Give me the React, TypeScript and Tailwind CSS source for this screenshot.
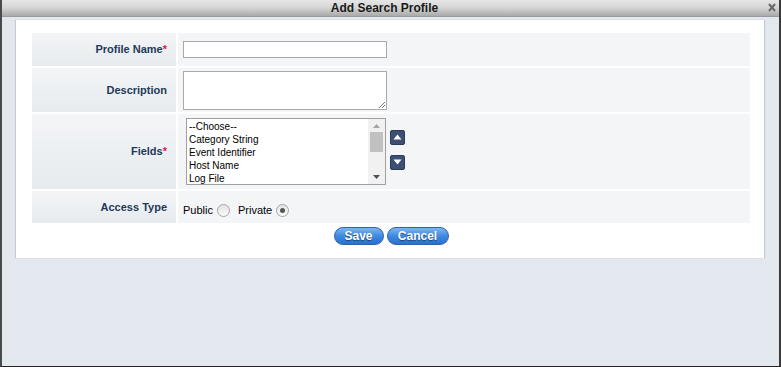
import React from "react";

const labelCell =
  "flex items-center justify-end pr-[9px] bg-gradient-to-b from-[#f3f5f7] to-[#e7ebee] text-[11px] font-bold text-[#1d3a57]";
const valueCell = "flex items-center pl-[5px] bg-[#f3f5f7]";

function Req() {
  return <span className="text-[#e0204a]">*</span>;
}

function ArrowBtn({ up }: { up?: boolean }) {
  return (
    <div className="w-[15px] h-[15px] rounded-[2px] bg-[#3d5073] border border-[#2c3b57] flex items-center justify-center">
      <svg width="9" height="6" viewBox="0 0 9 6">
        {up ? (
          <polygon points="0.5,5.5 4.5,0.5 8.5,5.5" fill="#fff" />
        ) : (
          <polygon points="0.5,0.5 4.5,5.5 8.5,0.5" fill="#fff" />
        )}
      </svg>
    </div>
  );
}

function Radio({ checked }: { checked?: boolean }) {
  return (
    <span className="inline-flex w-[13px] h-[13px] rounded-full border border-[#a6a6a6] bg-gradient-to-b from-[#e2e2e2] to-[#fbfbfb] items-center justify-center">
      {checked && <span className="w-[5px] h-[5px] rounded-full bg-[#555]" />}
    </span>
  );
}

function PillButton({ children, w }: { children: React.ReactNode; w: string }) {
  return (
    <button
      className={`${w} h-[18px] rounded-full border border-[#2b63b3] bg-gradient-to-b from-[#7db5f0] via-[#3f8ae0] to-[#2a70d0] text-white text-[12px] font-bold leading-none [text-shadow:0_1px_1px_rgba(0,0,40,0.5)]`}
    >
      {children}
    </button>
  );
}

export default function App() {
  return (
    <div
      className="w-[781px] h-[367px] flex flex-col bg-[#e3e8ef] border-l-2 border-l-[#4a4a4a] border-r-2 border-r-[#3a3a3a] border-b border-b-[#222] overflow-hidden"
      style={{ fontFamily: '"Liberation Sans", Arial, sans-serif' }}
    >
      <div className="relative h-[17px] shrink-0 bg-gradient-to-b from-[#e6e6e6] via-[#d4d4d4] to-[#a9a9a9] border-b border-b-[#9a9a9a] flex items-center justify-center pr-[12px]">
        <span className="text-[12px] font-bold text-[#1a1a1a] leading-none">Add Search Profile</span>
        <svg className="absolute right-[3px] top-[3px]" width="8" height="9" viewBox="0 0 8 9">
          <line x1="1" y1="1" x2="7" y2="8" stroke="#6a6a6a" strokeWidth="2" />
          <line x1="7" y1="1" x2="1" y2="8" stroke="#6a6a6a" strokeWidth="2" />
        </svg>
      </div>
      <div className="flex-1 pt-[3px] pl-[14px] pr-[14px]">
        <div className="w-[748px] h-[238px] bg-white pt-[13px] pl-[16px] pr-[14px] shadow-[1px_0_1px_rgba(0,0,0,0.12),-1px_0_1px_rgba(0,0,0,0.12)]">
          <div className="grid grid-cols-[144px_572px] gap-x-[2px] gap-y-[2px]">
            <div className={`${labelCell} h-[33px]`}>
              Profile Name<Req />
            </div>
            <div className={`${valueCell} h-[33px]`}>
              <div className="w-[204px] h-[17px] border border-[#a9a9a9] bg-white" />
            </div>

            <div className={`${labelCell} h-[44px]`}>Description</div>
            <div className={`${valueCell} h-[44px]`}>
              <div className="relative w-[204px] h-[39px] border border-[#a9a9a9] bg-white">
                <svg className="absolute right-[1px] bottom-[1px]" width="7" height="7" viewBox="0 0 7 7">
                  <line x1="1" y1="7" x2="7" y2="1" stroke="#777" strokeWidth="1" />
                  <line x1="4" y1="7" x2="7" y2="4" stroke="#777" strokeWidth="1" />
                </svg>
              </div>
            </div>

            <div className={`${labelCell} h-[75px]`}>
              Fields<Req />
            </div>
            <div className={`${valueCell} h-[75px] pl-[8px] gap-[4px]`}>
              <div className="w-[200px] h-[67px] border border-[#a0a0a0] bg-white flex">
                <div className="flex-1 pl-[2px] pt-[1px] text-[10px] leading-[13px] text-black">
                  <div>--Choose--</div>
                  <div>Category String</div>
                  <div>Event Identifier</div>
                  <div>Host Name</div>
                  <div>Log File</div>
                </div>
                <div className="w-[17px] bg-[#f1f1f1] flex flex-col items-center">
                  <svg width="17" height="13" viewBox="0 0 17 13">
                    <polygon points="5,9 8.5,5 12,9" fill="#a3a3a3" />
                  </svg>
                  <div className="w-[13px] h-[20px] bg-[#c1c1c1]" />
                  <div className="flex-1" />
                  <svg width="17" height="13" viewBox="0 0 17 13">
                    <polygon points="5,4 8.5,8 12,4" fill="#505050" />
                  </svg>
                </div>
              </div>
              <div className="flex flex-col gap-[10px] mt-[-4px]">
                <ArrowBtn up />
                <ArrowBtn />
              </div>
            </div>

            <div className={`${labelCell} h-[32px]`}>Access Type</div>
            <div className={`${valueCell} h-[32px] pt-[6px] text-[11px] text-black gap-[4px]`}>
              <span>Public</span>
              <Radio />
              <span className="ml-[4px]">Private</span>
              <Radio checked />
            </div>
          </div>
          <div className="flex justify-center gap-[3px] mt-[4px]">
            <PillButton w="w-[50px]">Save</PillButton>
            <PillButton w="w-[62px]">Cancel</PillButton>
          </div>
        </div>
      </div>
    </div>
  );
}
